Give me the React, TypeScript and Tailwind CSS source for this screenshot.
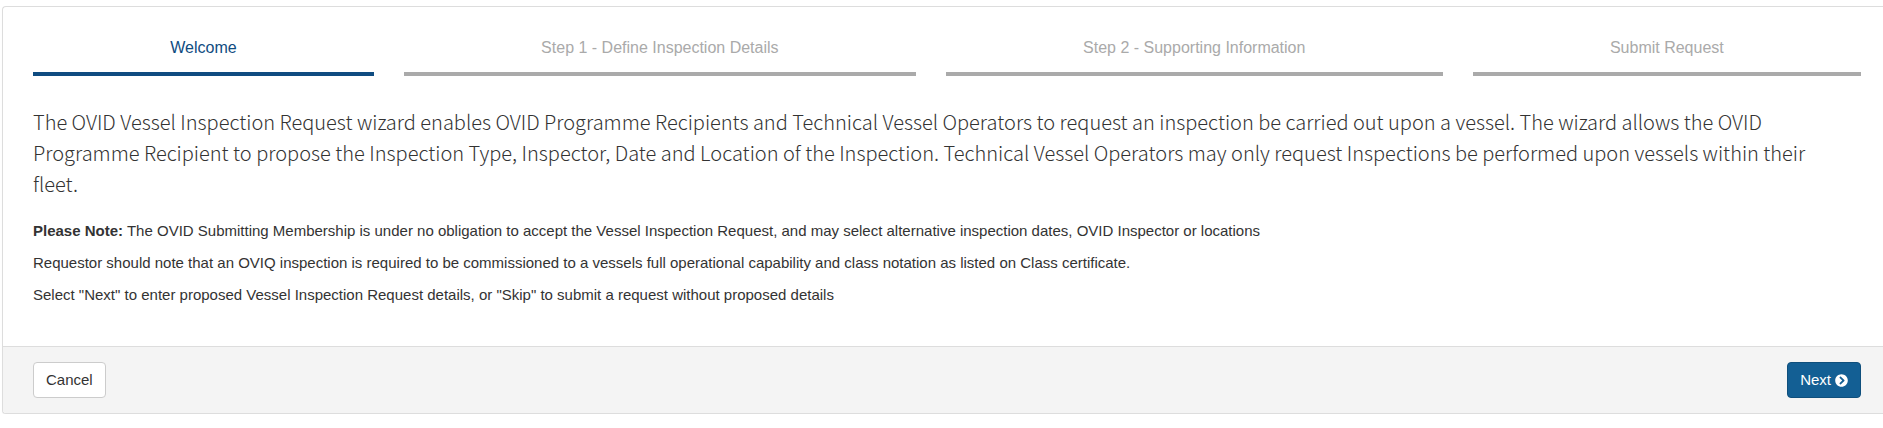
import { FaChevronCircleRight } from 'react-icons/fa';

const steps = [
  { label: 'Welcome', active: true },
  { label: 'Step 1 - Define Inspection Details', active: false },
  { label: 'Step 2 - Supporting Information', active: false },
  { label: 'Submit Request', active: false },
];

export default function App() {
  return (
    <main className="pt-[6px] pl-[2px] font-['Liberation_Sans',Arial,sans-serif] text-[15px] leading-[22px] text-[#333333]">
      <section className="rounded-l border border-r-0 border-[#dddddd] bg-white shadow-[0_1px_1px_rgba(0,0,0,0.05)]">
        <div className="pt-[29px] pr-[22px] pb-[30px] pl-[30px]">
          <WizardSteps />

          <p className="mt-[30px] mb-[21px] pr-5 font-['Noto_Sans_CJK_SC',sans-serif] text-xl leading-[31px] font-light">
            The OVID Vessel Inspection Request wizard enables OVID Programme Recipients and Technical Vessel Operators to
            request an inspection be carried out upon a vessel. The wizard allows the OVID Programme Recipient to propose
            the Inspection Type, Inspector, Date and Location of the Inspection. Technical Vessel Operators may only
            request Inspections be performed upon vessels within their fleet.
          </p>

          <p className="mb-[10px]">
            <strong className="font-bold">Please Note:</strong> The OVID Submitting Membership is under no obligation to
            accept the Vessel Inspection Request, and may select alternative inspection dates, OVID Inspector or
            locations
          </p>
          <p className="mb-[10px]">
            Requestor should note that an OVIQ inspection is required to be commissioned to a vessels full operational
            capability and class notation as listed on Class certificate.
          </p>
          <p className="mb-[10px]">
            Select "Next" to enter proposed Vessel Inspection Request details, or "Skip" to submit a request without
            proposed details
          </p>
        </div>

        <div className="flex items-center justify-between rounded-bl-[3px] border-t border-[#dddddd] bg-[#f4f4f4] py-[15px] pr-[22px] pl-[30px]">
          <button type="button" className="rounded border border-[#cccccc] bg-white px-3 py-[6px]">
            Cancel
          </button>
          <button
            type="button"
            className="flex items-center gap-1 rounded border border-[#0f4f7c] bg-[#135f94] px-3 py-[6px] text-white"
          >
            Next
            <FaChevronCircleRight className="size-[13px]" aria-hidden="true" />
          </button>
        </div>
      </section>
    </main>
  );
}

function WizardSteps() {
  return (
    <ol className="flex gap-[30px] text-center text-base leading-6">
      {steps.map((step) => (
        <li
          key={step.label}
          aria-current={step.active ? 'step' : undefined}
          className={`flex-auto border-b-4 pb-3 ${
            step.active ? 'border-[#0f4c81] text-[#0f4c81]' : 'border-[#aaaaaa] text-[#aaaaaa]'
          }`}
        >
          {step.label}
        </li>
      ))}
    </ol>
  );
}
